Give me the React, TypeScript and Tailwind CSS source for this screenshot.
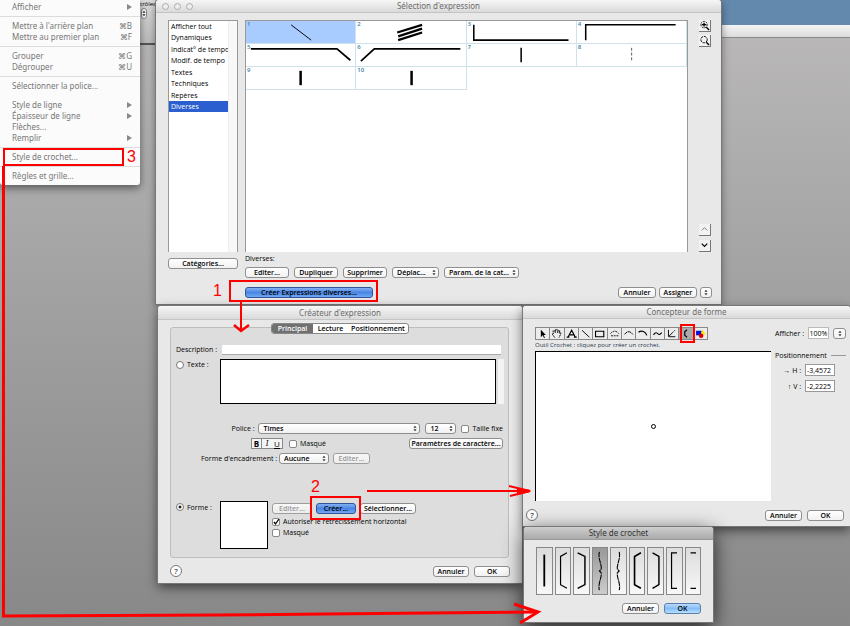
import type { ReactNode } from 'react';
import { useState } from 'react';
import clsx from 'clsx';

const categories = [
  'Afficher tout',
  'Dynamiques',
  'Indicat° de tempo',
  'Modif. de tempo',
  'Textes',
  'Techniques',
  'Repères',
  'Diverses',
];

type MenuEntry = { label: string; shortcut?: string; submenu?: boolean };

const menuGroups: MenuEntry[][] = [
  [{ label: 'Afficher', submenu: true }],
  [
    { label: "Mettre à l'arrière plan", shortcut: '⌘B' },
    { label: 'Mettre au premier plan', shortcut: '⌘F' },
  ],
  [
    { label: 'Grouper', shortcut: '⌘G' },
    { label: 'Dégrouper', shortcut: '⌘U' },
  ],
  [{ label: 'Sélectionner la police...' }],
  [
    { label: 'Style de ligne', submenu: true },
    { label: 'Épaisseur de ligne', submenu: true },
    { label: 'Flèches...' },
    { label: 'Remplir', submenu: true },
  ],
  [{ label: 'Style de crochet...' }],
  [{ label: 'Règles et grille...' }],
];

// Shapes of the expression cells, drawn on a 110x23 grid
const expressions: ReactNode[] = [
  <path d="M45 4 66 20" />,
  <path d="M41 12 67 4M42 16 67 8M42 20 67 12" strokeWidth="2.4" />,
  <path d="M5 4V20H104" strokeWidth="1.6" />,
  <path d="M7 20V4H101" strokeWidth="1.6" />,
  <path d="M3 5H93L107 17" strokeWidth="1.8" />,
  <path d="M3 18 17 5H107" strokeWidth="1.8" />,
  <path d="M54.5 4V19" strokeWidth="1.6" />,
  <path d="M55 4V19" strokeDasharray="3 2" stroke="#555" />,
  <path d="M55 4V19" strokeWidth="2.6" />,
  <path d="M56 4V19" strokeWidth="2.6" />,
];

const tools: { name: string; icon: ReactNode }[] = [
  { name: 'Sélection', icon: <path d="M5 2V10L7 8 8.5 11 9.5 10.5 8 7.5H10.5Z" fill="#000" stroke="none" /> },
  { name: 'Main', icon: <path d="M5 10.5 2 6.5 3.5 6 3 3 5 3 5.5 5 6 1.500H7.5L8 5 9 2.500 10.5 3 9.5 5.500 11.5 5 11.5 6.5 9.5 10.5" strokeDasharray="2 .6" /> },
  { name: 'Texte', icon: <path d="M3 10 7 2.5 11 10M5 7.500H9M1.5 10H4.500M9.5 10H12.500" strokeWidth="1.3" /> },
  { name: 'Ligne', icon: <path d="M3 2.5 11 10" /> },
  { name: 'Rectangle', icon: <path d="M2.5 3.5H11.5V9.5H2.5Z" strokeWidth="1.2" /> },
  { name: 'Ellipse', icon: <path d="M2.5 6Q7 1 11.5 6M3 8.5H11" strokeDasharray="2 1" /> },
  { name: 'Arc', icon: <path d="M2.5 7Q7 1 11.5 7" strokeDasharray="4 .5" /> },
  { name: 'Liaison', icon: <path d="M2.5 4.5C6 2.5 10 3.5 11.5 8" strokeWidth="1.3" /> },
  { name: 'Courbe', icon: <path d="M2.5 7.5C4.5 4 6.5 5 7.5 6.5S10 6.5 11.5 5" strokeWidth="1.2" /> },
  { name: 'Polygone', icon: <path d="M3.5 2V9.5H11M3.5 9.5 10.5 2.500" strokeDasharray="7 1" /> },
  { name: 'Crochet', icon: <path d="M8.5 2 6 4V8L8.5 10" strokeWidth="1.3" /> },
  {
    name: 'Graphique',
    icon: (
      <g stroke="none">
        <path d="M2 3H8V8H2Z" fill="#0013d8" />
        <path d="M9 1.5 12.5 7H7Z" fill="#ffe600" />
        <circle cx="7.5" cy="8.5" r="2.5" fill="#d90000" />
      </g>
    ),
  },
];

// Bracket styles on a 16x48 grid
const brackets: { name: string; icon: ReactNode }[] = [
  { name: 'Trait', icon: <path d="M8 6V41" strokeWidth="2" /> },
  { name: 'Crochet gauche', icon: <path d="M12 4 5 8V39L12 43" strokeWidth="1.3" /> },
  { name: 'Crochet droit', icon: <path d="M4 4 12 8V39L4 43" strokeWidth="1.6" /> },
  { name: 'Accolade droite', icon: <path d="M7 3C5 10 10 17 9 22L7 24 9 26C10 31 5 38 7 45" strokeDasharray="6 .7" strokeWidth="1.2" /> },
  { name: 'Accolade gauche', icon: <path d="M9 3C11 10 6 17 7 22L9 24 7 26C6 31 11 38 9 45" strokeDasharray="6 .7" strokeWidth="1.2" /> },
  { name: 'Crochet gauche épais', icon: <path d="M12 4 5 8V39L12 43" strokeWidth="1.8" /> },
  { name: 'Crochet droit épais', icon: <path d="M5 4 12 8V39L5 43" strokeWidth="1.6" /> },
  { name: 'Carré gauche', icon: <path d="M11 4H5V43H11" strokeWidth="1.3" /> },
  { name: 'Extrémités', icon: <path d="M5 4H11M5 43H11" strokeWidth="1.3" /> },
];

function Window({ title, className, bar, active, lights, children }: {
  title: string;
  className: string;
  bar: string;
  active?: boolean;
  lights?: boolean;
  children: ReactNode;
}) {
  return (
    <section className={clsx('absolute flex flex-col rounded-t-[3px] bg-[#e8e8e8] ring-1 ring-[#777]', className)}>
      <header
        className={clsx(
          "relative flex shrink-0 items-center justify-center rounded-t-[3px] border-b font-['Noto_Sans',sans-serif] text-[8px] leading-none",
          bar,
          active
            ? 'border-[#999] bg-linear-to-b from-[#cfcfcf] to-[#aaa] text-[#333]'
            : 'border-[#c4c4c4] bg-linear-to-b from-[#f6f6f6] to-[#dadada] text-[#6c6c6c]',
        )}
      >
        {lights && (
          <div className="absolute left-[6px] flex gap-[5px]">
            {[0, 1, 2].map((i) => (
              <i key={i} className="size-[7px] rounded-full border border-[#aaa] bg-[#eee]" />
            ))}
          </div>
        )}
        <h2>{title}</h2>
      </header>
      {children}
    </section>
  );
}

function Btn({ children, className, kind = 'plain', label }: {
  children: ReactNode;
  className: string;
  kind?: 'plain' | 'blue' | 'light';
  label?: string;
}) {
  return (
    <button
      type="button"
      aria-label={label}
      className={clsx(
        'flex h-[11px] shrink-0 items-center justify-center rounded-[3px] border leading-none font-semibold whitespace-nowrap',
        kind === 'plain' && 'border-[#8f8f8f] bg-linear-to-b from-white to-[#f1f1f1]',
        kind === 'blue' && 'border-[#34549a] bg-linear-to-b from-[#83b0f2] via-[#4a85e4] to-[#6fa8f5]',
        kind === 'light' && 'border-[#5c7fae] bg-linear-to-b from-[#b9dafb] via-[#86bdf7] to-[#b5e0ff]',
        className,
      )}
    >
      {children}
    </button>
  );
}

function UpDown() {
  return (
    <svg viewBox="0 0 5 8" className="pointer-events-none h-[7px] w-[4px]" aria-hidden="true">
      <path d="M.5 3 2.5.5 4.5 3ZM.5 5 2.5 7.5 4.5 5Z" fill="#333" />
    </svg>
  );
}

function Popup({ value, label, id, className }: { value: string; label?: string; id?: string; className: string }) {
  return (
    <span className={clsx('relative flex h-[11px] shrink-0 items-center', className)}>
      <select
        id={id}
        aria-label={label}
        className="h-full w-full appearance-none rounded-[3px] border border-[#8f8f8f] bg-linear-to-b from-white to-[#f1f1f1] pl-[4px] leading-none font-semibold"
      >
        <option>{value}</option>
      </select>
      <span className="pointer-events-none absolute right-[3px]"><UpDown /></span>
    </span>
  );
}

function Check({ label, checked }: { label: string; checked?: boolean }) {
  const [on, setOn] = useState(!!checked);
  return (
    <label className="flex items-center gap-[3px] whitespace-nowrap">
      <span className="relative flex size-[8px]">
        <input
          type="checkbox"
          checked={on}
          onChange={() => setOn(!on)}
          className="size-[8px] appearance-none rounded-[2px] border border-[#888] bg-white"
        />
        {on && (
          <svg viewBox="0 0 8 8" className="pointer-events-none absolute inset-0 size-[8px]">
            <path d="M2 4 3.5 6 7 1" fill="none" stroke="#000" strokeWidth="1.3" />
          </svg>
        )}
      </span>
      {label}
    </label>
  );
}

function Help() {
  return (
    <button type="button" className="flex size-[12px] items-center justify-center rounded-full border border-[#777] bg-white text-[8px] leading-none">
      ?
    </button>
  );
}

function SideButton({ name, children }: { name: string; children: ReactNode }) {
  return (
    <button type="button" aria-label={name} className="size-[12px] border-r border-b border-[#777] bg-[#f2f2f2]">
      <svg viewBox="0 0 12 12" className="size-[11px]" fill="none" stroke="#000">{children}</svg>
    </button>
  );
}

function ContextMenu() {
  return (
    <nav className="absolute top-0 left-0 w-[140px] rounded-b-[3px] bg-[#fbfbfb] font-['Noto_Sans',sans-serif] text-[8px] text-[#777] shadow-[0_3px_8px_rgba(0,0,0,0.5)]">
      {menuGroups.map((group, i) => (
        <ul
          key={i}
          className={clsx(
            'pr-[8px] pb-[4px] pl-[12px]',
            i === 0 && 'pt-px',
            i === 4 && 'pt-[4px]',
            i !== 0 && i !== 4 && 'border-t border-[#dcdcdc] pt-[3px]',
          )}
        >
          {group.map((item) => (
            <li key={item.label}>
              <button type="button" className="flex w-full items-center justify-between leading-[11px]">
                <span>{item.label}</span>
                {item.shortcut && <span>{item.shortcut}</span>}
                {item.submenu && (
                  <svg viewBox="0 0 5 6" className="h-[6px] w-[5px]"><path d="M0 0 5 3 0 6Z" fill="#888" /></svg>
                )}
              </button>
            </li>
          ))}
        </ul>
      ))}
    </nav>
  );
}

function SelectionWindow() {
  const [selected, setSelected] = useState('Diverses');
  return (
    <Window title="Sélection d'expression" bar="h-[13px]" lights className="top-0 left-[156px] w-[565px] pb-[6px] shadow-[0_2px_8px_rgba(0,0,0,0.5)]">
      <div className="flex pt-[7px] pr-[10px] pl-[12px]">
        <div className="flex h-[232px] w-[70px] border border-b-0 border-[#999] bg-white">
          <ul className="flex h-[91px] min-w-0 flex-1 flex-col justify-between">
            {categories.map((name) => (
              <li key={name}>
                <button
                  type="button"
                  onClick={() => setSelected(name)}
                  className={clsx(
                    'block h-[11px] w-full pl-[2px] text-left leading-[11px] font-medium whitespace-nowrap',
                    selected === name && 'bg-[#2b5fd0] text-white',
                  )}
                >
                  {name}
                </button>
              </li>
            ))}
          </ul>
          <div className="w-[9px] border-l border-[#eee] bg-[#f8f8f8]" />
        </div>
        <div className="ml-[7px] h-[232px] flex-1 border border-b-0 border-[#999] bg-white">
          <div className="grid grid-cols-4">
            {expressions.map((shape, i) => (
              <div key={i} className={clsx('relative h-[23px] border-r border-b border-[#cfe2ec]', i === 0 && 'bg-[#a8ccff]')}>
                <span className="absolute top-0 left-px text-[6px] leading-[7px] font-semibold text-[#3c7fa5]">{i + 1}</span>
                <svg viewBox="0 0 110 23" className="h-full w-full" fill="none" stroke="#000">{shape}</svg>
              </div>
            ))}
          </div>
        </div>
        <div className="ml-[11px] flex flex-col justify-between">
          <div className="flex flex-col gap-[3px]">
            <SideButton name="Agrandir"><path d="M8 8 11 11M3 5H8M5.5 3V7" strokeWidth="1.5" /><circle cx="5.5" cy="5" r="3.5" strokeDasharray="2 1" /></SideButton>
            <SideButton name="Réduire"><path d="M8 8 11 11" strokeWidth="1.5" /><circle cx="5.5" cy="5" r="3.5" strokeDasharray="3 1" /></SideButton>
          </div>
          <div className="flex flex-col gap-[4px]">
            <SideButton name="Monter"><path d="M3 7 6 4 9 7" stroke="#777" /></SideButton>
            <SideButton name="Descendre"><path d="M3 4 6 7 9 4" strokeWidth="1.3" /></SideButton>
          </div>
        </div>
      </div>
      <div className="flex pr-[9px] pl-[12px]">
        <div className="pt-[6px]"><Btn className="w-[70px]">Catégories...</Btn></div>
        <div className="ml-[7px] flex-1">
          <p className="pt-[2px] leading-[10px] font-medium">Diverses:</p>
          <div className="mt-[3px] flex gap-[5px]">
            <Btn className="w-[44px]">Editer...</Btn>
            <Btn className="w-[44px]">Dupliquer</Btn>
            <Btn className="w-[44px]">Supprimer</Btn>
            <Popup label="Déplacer" value="Déplac..." className="w-[47px]" />
            <Popup label="Paramètres de la catégorie" value="Param. de la cat..." className="w-[75px]" />
          </div>
          <div className="mt-[9px] flex gap-[3px]">
            <Btn kind="blue" className="mr-auto w-[128px]">Créer Expressions diverses...</Btn>
            <Btn className="w-[38px]">Annuler</Btn>
            <Btn className="w-[38px]">Assigner</Btn>
            <Btn label="Options" className="w-[12px]"><UpDown /></Btn>
          </div>
        </div>
      </div>
    </Window>
  );
}

function CreatorWindow() {
  return (
    <Window title="Créateur d'expression" bar="h-[14px]" className="top-[306px] left-[158px] w-[364px] pb-[6px] shadow-[0_4px_12px_rgba(0,0,0,0.6)]">
      <div className="px-[12px] pt-[3px]">
        <div className="relative z-10 mx-auto flex h-[11px] w-[138px] overflow-hidden rounded-[3px] border border-[#888] bg-white leading-none font-semibold">
          <button type="button" className="w-[41px] bg-[#707070] text-white">Principal</button>
          <button type="button" className="w-[35px]">Lecture</button>
          <button type="button" className="flex-1">Positionnement</button>
        </div>
        <div className="-mt-[7px] mr-px h-[231px] rounded-[3px] border border-[#bdbdbd] bg-[#dddddd] pr-[4px] pl-[5px] font-medium">
          <div className="mt-[17px] flex items-center pr-[3px]">
            <label htmlFor="description" className="w-[46px] leading-[10px] whitespace-nowrap">Description :</label>
            <input id="description" className="h-[10px] min-w-0 flex-1 border-b border-[#aaa] bg-white" />
          </div>
          <div className="mt-[4px] flex">
            <label className="flex h-[11px] w-[44px] items-center gap-[3px]">
              <input type="radio" name="kind" className="size-[8px] appearance-none rounded-full border border-[#777] bg-white" />
              Texte :
            </label>
            <textarea aria-label="Texte" className="h-[45px] min-w-0 flex-1 resize-none border border-black bg-white" />
            <div className="ml-[2px] w-[6px] bg-[#f4f4f4]" />
          </div>
          <div className="mt-[19px] flex items-center justify-end pr-px">
            <label htmlFor="police" className="mr-[4px]">Police :</label>
            <div className="flex gap-[5px]">
              <Popup id="police" value="Times" className="w-[162px]" />
              <Popup label="Taille" value="12" className="w-[31px]" />
              <Check label="Taille fixe" />
            </div>
          </div>
          <div className="mt-[4px] flex items-center pr-px pl-[75px]">
            <div className="mr-[6px] flex border border-[#888] bg-[#f5f5f5] text-[8px] leading-[9px]">
              <button type="button" className="w-[10px] border-r border-[#888] font-bold">B</button>
              <button type="button" className="w-[10px] font-serif italic">I</button>
              <button type="button" className="w-[10px] underline">U</button>
            </div>
            <Check label="Masqué" />
            <Btn className="ml-auto w-[94px]">Paramètres de caractère...</Btn>
          </div>
          <div className="mt-[4px] flex items-center pl-[25px]">
            <label htmlFor="cadre" className="w-[78px] whitespace-nowrap">Forme d'encadrement :</label>
            <Popup id="cadre" value="Aucune" className="w-[50px]" />
            <Btn className="ml-[4px] w-[37px] text-[#888] opacity-80">Editer...</Btn>
          </div>
          <div className="mt-[37px] flex">
            <label className="flex h-[12px] w-[44px] items-center gap-[3px]">
              <input type="radio" name="kind" defaultChecked className="size-[8px] appearance-none rounded-full border border-[#777] bg-white bg-radial from-[#222] from-30% to-white to-40%" />
              Forme :
            </label>
            <div className="size-[48px] border border-black bg-white" />
            <div className="ml-[4px] flex flex-col gap-[2px] pt-[2px]">
              <div className="flex gap-[4px]">
                <Btn className="w-[40px] text-[#888] opacity-80">Editer...</Btn>
                <Btn kind="blue" className="w-[40px]">Créer...</Btn>
                <Btn className="w-[56px]">Sélectionner...</Btn>
              </div>
              <div className="flex flex-col leading-[11px]">
                <Check label="Autoriser le rétrécissement horizontal" checked />
                <Check label="Masqué" />
              </div>
            </div>
          </div>
        </div>
        <div className="mt-[7px] flex items-center gap-[5px]">
          <Help />
          <Btn className="ml-auto w-[36px]">Annuler</Btn>
          <Btn className="w-[36px]">OK</Btn>
        </div>
      </div>
    </Window>
  );
}

function DesignerWindow() {
  return (
    <Window title="Concepteur de forme" bar="h-[13px]" className="top-[306px] right-0 left-[523px] pb-[5px] shadow-[0_4px_12px_rgba(0,0,0,0.6)]">
      <div className="flex gap-[4px] pt-[8px] pr-[4px] pl-[12px]">
        <div className="flex-1">
          <div className="flex w-[173px] border border-[#888]">
            {tools.map((tool) => (
              <button
                key={tool.name}
                type="button"
                aria-label={tool.name}
                className={clsx('h-[11px] flex-1 border-r border-[#888] last:border-r-0', tool.name === 'Crochet' ? 'bg-[#aaa]' : 'bg-[#ececec]')}
              >
                <svg viewBox="0 0 14 12" className="h-full w-full" fill="none" stroke="#000">{tool.icon}</svg>
              </button>
            ))}
          </div>
          <p className="text-[6px] leading-[11px] text-[#26384d]">Outil Crochet : cliquez pour créer un crochet.</p>
          <div className="flex h-[150px] items-center justify-center border-t border-l border-black bg-white">
            <i className="size-[5px] rounded-full border border-black" />
          </div>
        </div>
        <div className="flex w-[71px] flex-col font-medium">
          <div className="flex items-center justify-between">
            <label htmlFor="zoom">Afficher :</label>
            <span className="flex items-center gap-[4px]">
              <input id="zoom" defaultValue="100%" className="h-[12px] w-[21px] border border-[#bbb] bg-white text-center" />
              <Btn label="Échelle" className="w-[13px]"><UpDown /></Btn>
            </span>
          </div>
          <div className="mt-[12px] flex items-center gap-[4px]">
            <span>Positionnement</span>
            <span className="h-px flex-1 bg-[#999]" />
          </div>
          <div className="mt-[4px] flex flex-col gap-[4px] pr-[11px]">
            <label className="flex items-center justify-end gap-[4px]">
              → H :
              <input defaultValue="-3,4572" className="h-[12px] w-[30px] border border-[#999] bg-white px-px" />
            </label>
            <label className="flex items-center justify-end gap-[4px]">
              ↑ V :
              <input defaultValue="-2,2225" className="h-[12px] w-[30px] border border-[#999] bg-white px-px" />
            </label>
          </div>
        </div>
      </div>
      <div className="mt-[8px] flex items-center gap-[5px] pr-[6px] pl-[3px]">
        <Help />
        <Btn className="ml-auto w-[37px]">Annuler</Btn>
        <Btn className="w-[37px]">OK</Btn>
      </div>
    </Window>
  );
}

function BracketWindow() {
  const [style, setStyle] = useState(3);
  return (
    <Window title="Style de crochet" bar="h-[13px]" active className="top-[527px] left-[524px] w-[189px] pb-[8px] shadow-[0_5px_20px_rgba(0,0,0,0.8)]">
      <div className="px-[12px] pt-[7px]">
        <div className="flex gap-[2px]">
          {brackets.map((b, i) => (
            <button
              key={b.name}
              type="button"
              aria-label={b.name}
              onClick={() => setStyle(i)}
              className={clsx(
                'h-[48px] flex-1 border border-[#888] bg-linear-to-b',
                i === style ? 'from-[#999] to-[#ccc]' : 'from-[#dcdcdc] to-[#f8f8f8]',
              )}
            >
              <svg viewBox="0 0 16 48" className="h-full w-full" fill="none" stroke="#000">{b.icon}</svg>
            </button>
          ))}
        </div>
        <div className="mt-[8px] flex justify-end gap-[5px]">
          <Btn className="w-[37px]">Annuler</Btn>
          <Btn kind="light" className="w-[37px]">OK</Btn>
        </div>
      </div>
    </Window>
  );
}

// Red boxes, arrows and step numbers laid over the windows
function Annotations() {
  return (
    <svg width="850" height="626" viewBox="0 0 850 626" className="pointer-events-none absolute top-0 left-0 z-20" fill="none" stroke="#f00" strokeWidth="2">
      <path d="M4 149H123V165H4Z" />
      <path d="M230 281H377V301H230Z" />
      <path d="M311 497H360V519H311Z" />
      <path d="M681 325H694V342H681Z" />
      <path d="M241 302V330" />
      <path d="M234 325 241 331 249 325" strokeWidth="2.5" />
      <path d="M367 491H528" />
      <path d="M509 486 530 491 510 496" />
      <path d="M518 489 530 491 518 494Z" fill="#f00" />
      <path d="M3.5 166V616L217 615 325 614 430 613 538 612" strokeWidth="3" />
      <path d="M514 604 538 612 520 623" strokeWidth="3" />
      <g fill="#f00" stroke="none" fontSize="16" fontFamily="Liberation Sans, sans-serif">
        <text x="213" y="296">1</text>
        <text x="311" y="492">2</text>
        <text x="127" y="162">3</text>
      </g>
    </svg>
  );
}

export default function App() {
  return (
    <main className="relative min-h-screen w-full overflow-hidden bg-linear-to-b from-[#bcbaba] via-[#a0a0a0] to-[#888] font-['Open_Sans','Noto_Sans',sans-serif] text-[7px] leading-[9px] text-black">
      {/* Desktop and document window behind the dialogs */}
      <div className="h-[25px] bg-[#6389ad]" />
      <div className="h-[13px] border-b border-[#888] bg-linear-to-b from-[#f4f4f4] to-[#dcdcdc]" />
      <div className="absolute top-0 left-[120px] h-[45px] w-[40px] border-b-2 border-[#555] bg-linear-to-b from-[#ddd] to-[#bbb]">
        <span className="block pl-[20px] text-[6px] leading-[8px]">trôles</span>
        <i className="ml-[21px] flex h-[11px] w-[6px] items-center justify-center rounded-[3px] border border-[#888] bg-white"><UpDown /></i>
      </div>
      <SelectionWindow />
      <CreatorWindow />
      <DesignerWindow />
      <BracketWindow />
      <ContextMenu />
      <Annotations />
    </main>
  );
}
